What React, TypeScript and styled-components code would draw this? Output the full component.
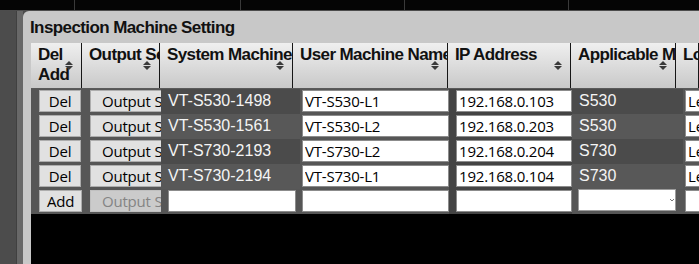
import styled, {createGlobalStyle} from 'styled-components'

const GlobalStyle = createGlobalStyle`
  html, body {
    margin: 0;
    padding: 0;
    background: #4c4c4c;
  }
  body {
    font-family: 'Liberation Sans', Arial, sans-serif;
  }
`

const Page = styled.div`
  display: flex;
  flex-direction: column;
  width: 699px;
  height: 264px;
  overflow: hidden;
  background: #4c4c4c;
`

const TopBar = styled.div`
  display: flex;
  flex-shrink: 0;
  height: 10px;
  background: #050505;
`

const TopTab = styled.div<{$w?: number}>`
  box-sizing: border-box;
  width: ${p => (p.$w ? `${p.$w}px` : 'auto')};
  flex: ${p => (p.$w ? 'none' : '1')};
  border-right: ${p => (p.$w ? '1px solid #3a3a3a' : 'none')};
`

const Main = styled.div`
  display: flex;
  flex: 1;
  min-height: 0;
  padding-top: 1px;
`

const LeftRail = styled.div`
  box-sizing: border-box;
  width: 17px;
  flex-shrink: 0;
  background: #4c4c4c;
  border-right: 1px solid #404040;
`

const Gutter = styled.div`
  width: 6px;
  flex-shrink: 0;
  background: #686868;
`

const Panel = styled.div`
  display: flex;
  flex-direction: column;
  flex: 1;
  min-width: 0;
  padding: 7px 0 0 8px;
  background: #c8c8c8;
  border-top-left-radius: 6px;
`

const Title = styled.div`
  margin: 0 0 5px -1px;
  font-size: 17px;
  font-weight: bold;
  line-height: 20px;
  letter-spacing: -0.6px;
  color: #111;
  white-space: nowrap;
`

const Table = styled.div`
  display: flex;
  flex-direction: column;
  flex: 1;
  min-width: 0;
  background: #000;
`

const HeaderRow = styled.div`
  box-sizing: border-box;
  display: grid;
  grid-template-columns: 51px 78px 133px 155px 123px 105px 1fr;
  height: 46px;
  border-bottom: 1px solid #5a5a5a;
`

const HeaderCell = styled.div<{$wrap?: boolean}>`
  position: relative;
  box-sizing: border-box;
  padding: 2px 0 0 7px;
  overflow: hidden;
  white-space: ${p => (p.$wrap ? 'normal' : 'nowrap')};
  border-right: 1px solid #161616;
  background: linear-gradient(#efefef, #c9c9c9);
  font-size: 17px;
  font-weight: bold;
  line-height: 20px;
  letter-spacing: -0.6px;
  color: #111;
`

const SortMark = styled.svg`
  position: absolute;
  top: 18px;
  right: 8px;
`

const SortIcon = () => (
  <SortMark width="8" height="9" viewBox="0 0 8 9">
    <polygon points="0,4 4,0 8,4" fill="#3a3a3a" />
    <polygon points="0,5 8,5 4,9" fill="#3a3a3a" />
  </SortMark>
)

const Row = styled.div`
  display: grid;
  grid-template-columns: 51px 79px 139px 149px 123px 111px 1fr;
  height: 25px;
  background: #565656;
`

const Cell = styled.div<{$shade?: string}>`
  display: flex;
  align-items: flex-start;
  min-width: 0;
  overflow: hidden;
  padding-top: 1px;
  background: ${p => p.$shade ?? 'transparent'};
`

const DarkText = styled.span`
  padding: 2px 0 0 7px;
  font-size: 16px;
  line-height: 18px;
  color: #f4f4f4;
  white-space: nowrap;
`

const Button = styled.button<{$w: number; $left?: boolean}>`
  flex-shrink: 0;
  box-sizing: border-box;
  width: ${p => p.$w}px;
  height: 22px;
  margin: 0 0 0 8px;
  padding: 1px 0 0 ${p => (p.$left ? '11px' : '0')};
  text-align: ${p => (p.$left ? 'left' : 'center')};
  background: #e1e1e1;
  border: 1px solid #adadad;
  border-radius: 0;
  font-family: 'Open Sans', 'Noto Sans', sans-serif;
  font-size: 15px;
  line-height: 19px;
  letter-spacing: -0.2px;
  color: #000;
  white-space: nowrap;

  &:disabled {
    background: #cbcbcb;
    border-color: #c0c0c0;
    color: #848484;
  }
`

const Field = styled.input<{$w: number; $left: number}>`
  flex-shrink: 0;
  box-sizing: border-box;
  width: ${p => p.$w}px;
  height: 22px;
  margin: 0 0 0 ${p => p.$left}px;
  padding: 0 0 0 2px;
  background: #fff;
  border: 1px solid #8c8c8c;
  border-radius: 0;
  outline: none;
  font-family: 'Open Sans', 'Noto Sans', sans-serif;
  font-size: 15px;
  letter-spacing: -0.2px;
  color: #000;
`

const SelectBox = styled.div`
  position: relative;
  box-sizing: border-box;
  width: 98px;
  height: 22px;
  margin: -1px 0 0 6px;
  background: #fff;
  border: 1px solid #9c9c9c;
`

const Chevron = styled.svg`
  position: absolute;
  top: 9px;
  right: 1px;
`

const rows = [
  {sys: 'VT-S530-1498', user: 'VT-S530-L1', ip: '192.168.0.103', model: 'S530'},
  {sys: 'VT-S530-1561', user: 'VT-S530-L2', ip: '192.168.0.203', model: 'S530'},
  {sys: 'VT-S730-2193', user: 'VT-S730-L2', ip: '192.168.0.204', model: 'S730'},
  {sys: 'VT-S730-2194', user: 'VT-S730-L1', ip: '192.168.0.104', model: 'S730'},
]

const headers = [
  'Output Setting',
  'System Machine Name',
  'User Machine Name',
  'IP Address',
  'Applicable Model',
  'Location',
]

const App = () => {
  return (
    <>
      <GlobalStyle />
      <Page>
        <TopBar>
          <TopTab $w={75} />
          <TopTab $w={166} />
          <TopTab $w={164} />
          <TopTab $w={164} />
          <TopTab />
        </TopBar>
        <Main>
          <LeftRail />
          <Gutter />
          <Panel>
            <Title>Inspection Machine Setting</Title>
            <Table>
              <HeaderRow>
                <HeaderCell $wrap>
                  Del
                  <br />
                  Add
                  <SortIcon />
                </HeaderCell>
                {headers.map((h, i) => (
                  <HeaderCell key={h}>
                    {h}
                    {i < headers.length - 1 && <SortIcon />}
                  </HeaderCell>
                ))}
              </HeaderRow>

              {rows.map((r, i) => {
                const shade = i % 2 === 0 ? '#4b4b4b' : '#585858'
                return (
                  <Row key={r.sys}>
                    <Cell>
                      <Button $w={42}>Del</Button>
                    </Cell>
                    <Cell>
                      <Button $w={100} $left>Output Setting</Button>
                    </Cell>
                    <Cell $shade={shade}>
                      <DarkText>{r.sys}</DarkText>
                    </Cell>
                    <Cell>
                      <Field $w={147} $left={2} readOnly defaultValue={r.user} />
                    </Cell>
                    <Cell $shade="#444">
                      <Field $w={116} $left={7} readOnly defaultValue={r.ip} />
                    </Cell>
                    <Cell $shade={shade}>
                      <DarkText>{r.model}</DarkText>
                    </Cell>
                    <Cell>
                      <Field $w={100} $left={2} readOnly defaultValue="Left" />
                    </Cell>
                  </Row>
                )
              })}

              <Row>
                <Cell>
                  <Button $w={43}>Add</Button>
                </Cell>
                <Cell>
                  <Button $w={100} $left disabled>Output Setting</Button>
                </Cell>
                <Cell>
                  <Field $w={128} $left={7} readOnly defaultValue="" />
                </Cell>
                <Cell>
                  <Field $w={147} $left={2} readOnly defaultValue="" />
                </Cell>
                <Cell $shade="#444">
                  <Field $w={116} $left={7} readOnly defaultValue="" />
                </Cell>
                <Cell>
                  <SelectBox>
                    <Chevron width="4" height="3" viewBox="0 0 4 3">
                      <polyline points="0,0 2,2 4,0" fill="none" stroke="#777" strokeWidth="1" />
                    </Chevron>
                  </SelectBox>
                </Cell>
                <Cell>
                  <Field $w={100} $left={2} readOnly defaultValue="" />
                </Cell>
              </Row>
            </Table>
          </Panel>
        </Main>
      </Page>
    </>
  )
}

export default App
